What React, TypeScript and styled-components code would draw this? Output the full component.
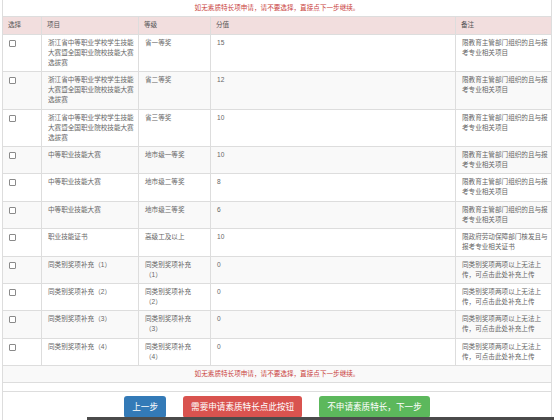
import React from "react";
import styled, { createGlobalStyle } from "styled-components";

const GlobalStyle = createGlobalStyle`
  html, body {
    margin: 0;
    padding: 0;
    background: #ffffff;
  }
  body {
    font-family: "Liberation Sans", "Noto Sans CJK SC", sans-serif;
    width: 554px;
    height: 420px;
    overflow: hidden;
  }
`;

const Page = styled.div`
  margin: 0 2px 0 2px;
  border-left: 1px solid #dddddd;
  border-right: 1px solid #dddddd;
  height: 420px;
  box-sizing: border-box;
  display: flex;
  flex-direction: column;
`;

const Table = styled.table`
  width: 100%;
  table-layout: fixed;
  border-collapse: separate;
  border-spacing: 0;
  font-size: 6.6px;
  line-height: 10px;
  color: #666666;
  margin-bottom: 8px;
  border-bottom: 1px solid #dddddd;
`;

const Row = styled.tr<{ $tone: "white" | "gray" | "head" }>`
  background: ${(p) =>
    p.$tone === "head" ? "#f2dede" : p.$tone === "gray" ? "#f9f9f9" : "#ffffff"};
`;

const Cell = styled.td<{ $first?: boolean; $padRight?: number }>`
  padding: 3px ${(p) => p.$padRight ?? 3}px 3.4px 6px;
  vertical-align: top;
  border-top: 1px solid #dddddd;
  border-left: ${(p) => (p.$first ? "none" : "1px solid #dddddd")};
  word-break: break-all;
`;

const HeadCell = styled.th<{ $first?: boolean }>`
  padding: 3px 3px 3.4px 5px;
  text-align: left;
  font-weight: normal;
  color: #555555;
  border-top: 1px solid #dddddd;
  border-left: ${(p) => (p.$first ? "none" : "1px solid #dddddd")};
`;

const NoticeCell = styled.td<{ $top?: boolean }>`
  padding: 3px 3px 3.4px 3px;
  text-align: center;
  color: #c9413c;
  border-top: ${(p) => (p.$top ? "none" : "1px solid #dddddd")};
`;

const Check = styled.input.attrs({ type: "checkbox" })`
  appearance: none;
  -webkit-appearance: none;
  display: block;
  width: 7px;
  height: 7px;
  margin: 2px 0 0 0;
  border: 1px solid #8a8a8a;
  border-radius: 1px;
  background: #ffffff;
  box-sizing: border-box;
`;

const Footer = styled.div`
  border-top: 1px solid #dddddd;
  padding-top: 4px;
  display: flex;
  justify-content: center;
  gap: 17px;
`;

const Button = styled.button<{ $color: string }>`
  height: 22px;
  padding: 0 8px;
  border: none;
  border-radius: 3px;
  background: ${(p) => p.$color};
  color: #ffffff;
  font-family: "Liberation Sans", "Noto Sans CJK SC", sans-serif;
  font-size: 8.6px;
  line-height: 22px;
  white-space: nowrap;
`;

const BottomBar = styled.div`
  position: fixed;
  left: 87px;
  right: 0;
  bottom: 0;
  height: 3px;
  background: #4b4b4b;
`;

type Item = { item: string; level: string; score: string; note: string };

const NOTE_EDU = "限教育主管部门组织的且与报考专业相关项目";
const BIG = "浙江省中等职业学校学生技能大赛暨全国职业院校技能大赛选拔赛";
const SUP = "同类别奖项两项以上无法上传，可点击此处补充上传";

const rows: Item[] = [
  { item: BIG, level: "省一等奖", score: "15", note: NOTE_EDU },
  { item: BIG, level: "省二等奖", score: "12", note: NOTE_EDU },
  { item: BIG, level: "省三等奖", score: "10", note: NOTE_EDU },
  { item: "中等职业技能大赛", level: "地市级一等奖", score: "10", note: NOTE_EDU },
  { item: "中等职业技能大赛", level: "地市级二等奖", score: "8", note: NOTE_EDU },
  { item: "中等职业技能大赛", level: "地市级三等奖", score: "6", note: NOTE_EDU },
  { item: "职业技能证书", level: "高级工及以上", score: "10", note: "限政府劳动保障部门核发且与报考专业相关证书" },
  { item: "同类别奖项补充（1）", level: "同类别奖项补充（1）", score: "0", note: SUP },
  { item: "同类别奖项补充（2）", level: "同类别奖项补充（2）", score: "0", note: SUP },
  { item: "同类别奖项补充（3）", level: "同类别奖项补充（3）", score: "0", note: SUP },
  { item: "同类别奖项补充（4）", level: "同类别奖项补充（4）", score: "0", note: SUP },
];

const NOTICE = "如无素质特长项申请，请不要选择，直接点下一步继续。";

export default function App() {
  return (
    <>
      <GlobalStyle />
      <Page>
        <Table>
          <colgroup>
            <col style={{ width: 38 }} />
            <col style={{ width: 97 }} />
            <col style={{ width: 72 }} />
            <col style={{ width: 245 }} />
            <col style={{ width: 96 }} />
          </colgroup>
          <tbody>
            <Row $tone="white">
              <NoticeCell $top colSpan={5}>{NOTICE}</NoticeCell>
            </Row>
            <Row $tone="head">
              <HeadCell $first>选择</HeadCell>
              <HeadCell>项目</HeadCell>
              <HeadCell>等级</HeadCell>
              <HeadCell>分值</HeadCell>
              <HeadCell>备注</HeadCell>
            </Row>
            {rows.map((r, i) => (
              <Row key={i} $tone={i % 2 === 1 ? "gray" : "white"}>
                <Cell $first>
                  <Check />
                </Cell>
                <Cell>{r.item}</Cell>
                <Cell $padRight={9}>{r.level}</Cell>
                <Cell>{r.score}</Cell>
                <Cell>{r.note}</Cell>
              </Row>
            ))}
            <Row $tone="gray">
              <NoticeCell colSpan={5}>{NOTICE}</NoticeCell>
            </Row>
          </tbody>
        </Table>
        <Footer>
          <Button $color="#337ab7">上一步</Button>
          <Button $color="#d9534f">需要申请素质特长点此按钮</Button>
          <Button $color="#5cb85c">不申请素质特长，下一步</Button>
        </Footer>
      </Page>
      <BottomBar />
    </>
  );
}
